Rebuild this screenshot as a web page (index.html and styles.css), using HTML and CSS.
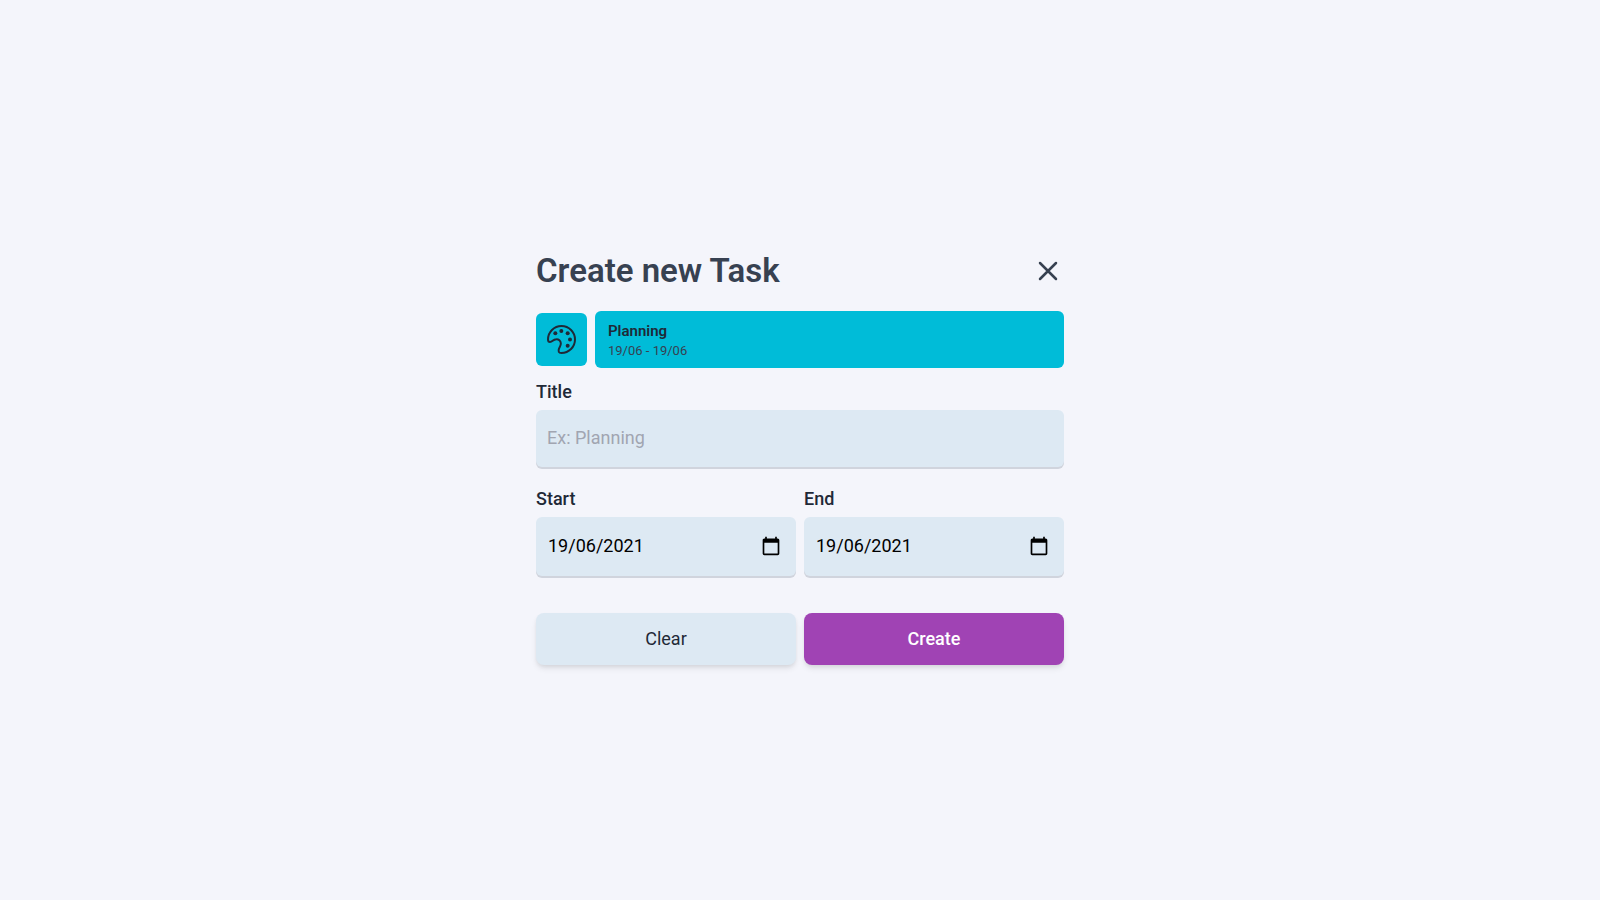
FILE: index.html
```html
<!DOCTYPE html>
<html lang="en">
<head>
  <meta charset="utf-8">
  <meta name="viewport" content="width=device-width, initial-scale=1">
  <title>Create new Task</title>
  <link rel="stylesheet" href="styles.css">
</head>
<body>
  <main class="page">
    <form class="task-form">
      <header class="form-header">
        <h1 class="form-title">Create new Task</h1>
        <button class="close-button" type="button" aria-label="Close">
          <svg class="close-icon" viewBox="0 0 32 32" aria-hidden="true"><path d="M8 8 24 24M24 8 8 24"/></svg>
        </button>
      </header>

      <div class="preview">
        <button class="color-button" type="button" aria-label="Choose color">
          <svg class="palette-icon" viewBox="0 0 87 87" aria-hidden="true">
            <path class="palette-outline" d="M3 43.500C3 21 21 3 43.500 3S84 21 84 43.500 66 84 43 84C35 84 33 79 36 71C39 65 42 61 41.500 55C41 47 35 42 28 42.500C17 43 17 51 9 51C4.500 51 3 48 3 43.500Z"/>
            <circle cx="25" cy="25" r="6"/>
            <circle cx="43" cy="18" r="6"/>
            <circle cx="62" cy="25" r="6"/>
            <circle cx="69" cy="43.500" r="6"/>
            <circle cx="62" cy="62" r="6"/>
          </svg>
        </button>
        <div class="task-card">
          <strong class="task-name">Planning</strong>
          <span class="task-dates">19/06 - 19/06</span>
        </div>
      </div>

      <div class="field">
        <label class="label" for="title">Title</label>
        <input class="control text-input" id="title" type="text" placeholder="Ex: Planning">
      </div>

      <div class="columns">
        <div class="field">
          <label class="label" for="start">Start</label>
          <div class="control date-control">
            <input class="date-input" id="start" type="text" inputmode="numeric" value="19/06/2021">
            <button class="calendar-button" type="button" aria-label="Pick start date">
              <svg class="calendar-icon" viewBox="0 0 24 24" aria-hidden="true"><path d="M20 3h-1V1h-2v2H7V1H5v2H4c-1.100 0-2 .9-2 2v16c0 1.100.9 2 2 2h16c1.100 0 2-.9 2-2V5c0-1.100-.9-2-2-2zm0 18H4V8h16v13z"/></svg>
            </button>
          </div>
        </div>
        <div class="field">
          <label class="label" for="end">End</label>
          <div class="control date-control">
            <input class="date-input" id="end" type="text" inputmode="numeric" value="19/06/2021">
            <button class="calendar-button" type="button" aria-label="Pick end date">
              <svg class="calendar-icon" viewBox="0 0 24 24" aria-hidden="true"><path d="M20 3h-1V1h-2v2H7V1H5v2H4c-1.100 0-2 .9-2 2v16c0 1.100.9 2 2 2h16c1.100 0 2-.9 2-2V5c0-1.100-.9-2-2-2zm0 18H4V8h16v13z"/></svg>
            </button>
          </div>
        </div>
      </div>

      <div class="columns actions">
        <button class="button button-clear" type="reset">Clear</button>
        <button class="button button-create" type="submit">Create</button>
      </div>
    </form>
  </main>
</body>
</html>
```
FILE: styles.css
```css
* {
  box-sizing: border-box;
}

body {
  margin: 0;
  background: #f4f5fb;
  color: #1f2937;
  font-family: Roboto, "Liberation Sans", sans-serif;
  font-size: 18px;
  line-height: 28px;
}

button,
input {
  margin: 0;
  padding: 0;
  border: 0;
  background: none;
  color: inherit;
  font: inherit;
}

button {
  cursor: pointer;
}

.page {
  display: flex;
  align-items: center;
  justify-content: center;
  min-height: 100vh;
  padding: 32px 16px 16px;
}

.task-form {
  width: 100%;
  max-width: 528px;
}

.form-header {
  display: flex;
  align-items: center;
  justify-content: space-between;
  margin-bottom: 20px;
}

.form-title {
  margin: 0;
  color: #374151;
  font-size: 33px;
  font-weight: 600;
  line-height: 40px;
}

.close-button {
  display: flex;
  color: #374151;
}

.close-icon {
  width: 32px;
  height: 32px;
  fill: none;
  stroke: currentColor;
  stroke-width: 2.5;
  stroke-linecap: round;
}

.preview {
  display: flex;
  align-items: center;
  gap: 8px;
  margin-bottom: 10px;
}

.color-button {
  display: flex;
  padding: 12px 11px;
  border-radius: 6px;
  background: #00bcd8;
}

.palette-icon {
  width: 29px;
  height: 29px;
  fill: currentColor;
}

.palette-outline {
  fill: none;
  stroke: currentColor;
  stroke-width: 6;
}

.task-card {
  display: flex;
  flex: 1;
  flex-direction: column;
  padding: 10px 13px 7px;
  border-radius: 6px;
  background: #00bcd8;
}

.task-name {
  font-size: 15px;
  font-weight: 600;
  line-height: 20px;
}

.task-dates {
  color: #374151;
  font-size: 13px;
  line-height: 20px;
}

.label {
  display: block;
  margin-bottom: 4px;
  font-weight: 500;
}

.control {
  width: 100%;
  border-radius: 6px;
  background: #dde9f3;
  box-shadow: 0 2px 0 #d0d4dd;
}

.text-input {
  display: block;
  height: 57px;
  padding: 0 11px 2px;
}

.text-input::placeholder {
  color: #a1a5b1;
  opacity: 1;
}

.columns {
  display: grid;
  grid-template-columns: repeat(2, minmax(0, 1fr));
  gap: 8px;
}

.field + .columns {
  margin-top: 18px;
}

.date-control {
  display: flex;
  align-items: center;
  height: 59px;
  padding: 0 15px 2px 12px;
}

.date-input {
  flex: 1;
  min-width: 0;
  color: #000;
}

.calendar-button {
  display: flex;
  color: #000;
}

.calendar-icon {
  width: 20px;
  height: 20px;
  fill: currentColor;
}

.actions {
  margin-top: 37px;
}

.button {
  height: 52px;
  border-radius: 8px;
  box-shadow: 0 4px 6px -1px rgba(0, 0, 0, 0.1), 0 2px 4px -1px rgba(0, 0, 0, 0.06);
}

.button-clear {
  background: #dde9f3;
}

.button-create {
  background: #a043b4;
  color: #fff;
  font-weight: 500;
}
```
